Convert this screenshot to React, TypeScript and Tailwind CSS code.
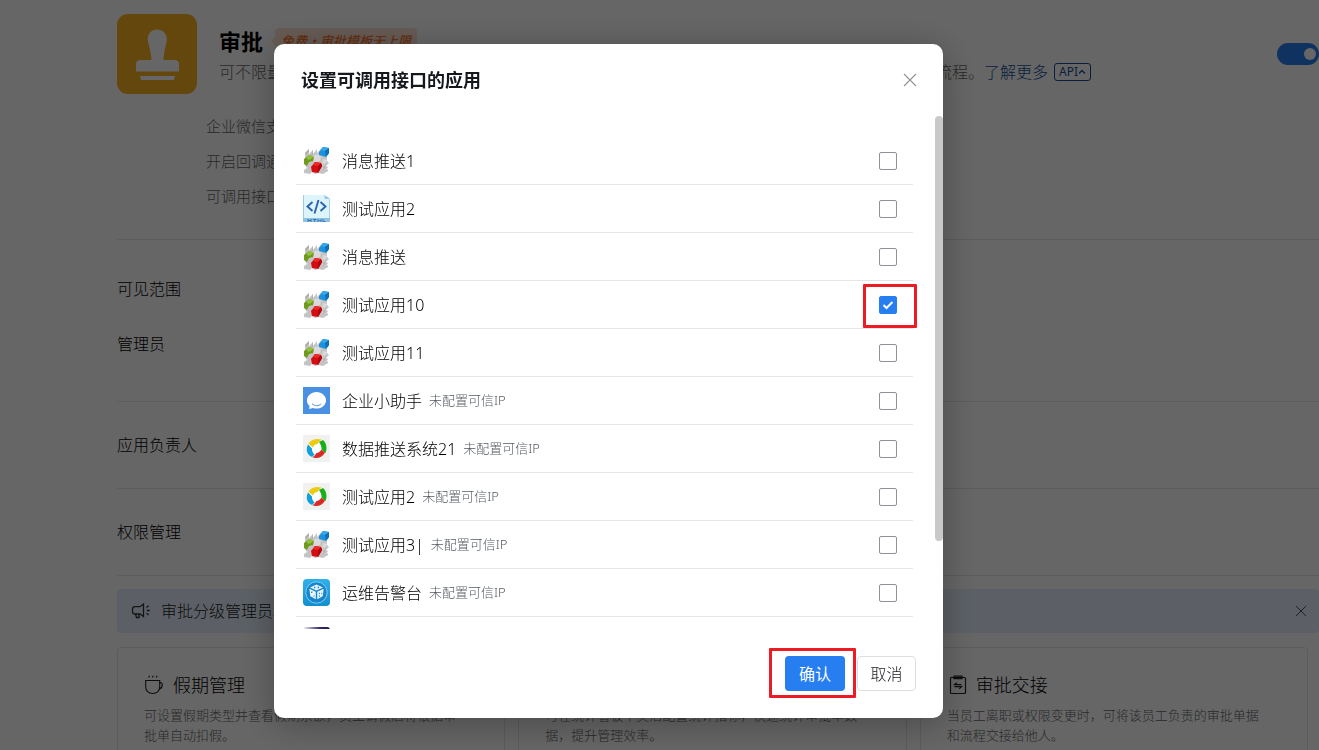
import { useState, type ReactNode } from "react";

type IconKind = "cubes" | "html" | "chat" | "ring" | "dice" | "dark";

interface AppItem {
  id: string;
  name: string;
  icon: IconKind;
  untrusted?: boolean;
  marked?: boolean;
}

const apps: AppItem[] = [
  { id: "a1", name: "消息推送1", icon: "cubes" },
  { id: "a2", name: "测试应用2", icon: "html" },
  { id: "a3", name: "消息推送", icon: "cubes" },
  { id: "a4", name: "测试应用10", icon: "cubes", marked: true },
  { id: "a5", name: "测试应用11", icon: "cubes" },
  { id: "a6", name: "企业小助手", icon: "chat", untrusted: true },
  { id: "a7", name: "数据推送系统21", icon: "ring", untrusted: true },
  { id: "a8", name: "测试应用2", icon: "ring", untrusted: true },
  { id: "a9", name: "测试应用3|", icon: "cubes", untrusted: true },
  { id: "a10", name: "运维告警台", icon: "dice", untrusted: true },
  { id: "a11", name: "", icon: "dark" },
];

function AppIcon({ kind }: { kind: IconKind }) {
  const cls = "h-[27px] w-[27px] shrink-0";
  if (kind === "cubes") {
    return (
      <svg viewBox="0 0 27 27" className={cls} aria-hidden="true">
        <path d="M2 6l4-4v5l4-4v4l4-5v4l3-3 1 5 6 2v4l2 2-3 3 2 1-2 3 2-1v2l-5 3-5-1-3 1-3-2-2 2-6-1v-3l3-2-2-3 2-2v-4H2z" fill="#c4c4c4" />
        <path d="M10 9l5-2 3 3-1 4-6 1zM20 12l4 1-1 3-4 1z" fill="#dadada" />
        <path d="M2 6l4-4v3L3 8zM9 5l1-2v5l-2 2zM20 20l3-1-2 3z" fill="#b0b0b0" />
        <path d="M16 5l4-5 6 1v5l-3 4-7-2z" fill="#1a93dc" />
        <path d="M17 3l3-3 6 1-4 3z" fill="#39a6e6" />
        <path d="M22 4l4-3v5l-3 4z" fill="#0d70b4" />
        <path d="M1 12l5-4 5 2-1 4-4 1-2 4-3-2z" fill="#6f9a1a" />
        <path d="M3 11l3-3 5 2-5 3z" fill="#92bf3c" />
        <path d="M8 20l4-5 6 1 1 3-4 7-6-1z" fill="#d60d10" />
        <path d="M12 15l6 1-3 3-5-1z" fill="#ee2a28" />
        <path d="M15 19l3-3 1 3-4 7z" fill="#b00408" />
      </svg>
    );
  }
  if (kind === "html") {
    return (
      <svg viewBox="0 0 27 27" className={cls} aria-hidden="true">
        <path d="M0 0h21l6 4v23H0z" fill="#dcf5fb" />
        <path d="M21 0l6 3.500-5 .5z" fill="#8fc5e0" />
        <path d="M0 0h.8v27H0zM26.300 4h.7v23h-.7z" fill="#8fc5e0" />
        <path d="M0 23h27v4H0z" fill="#8ec4e2" />
        <path d="M9.500 7L4.500 11.500l5 4.500M17.500 7l5 4.500-5 4.500M15.500 5l-4 13.500" stroke="#2c62b0" strokeWidth="1.900" fill="none" />
        <path d="M5 24v3M8 24v3M5 25.500h3M10 24.500h3.500M11.700 24.500v2.500M15 27v-2.500l1.500 1.500 1.500-1.500v2.500M20 24v2.500h2.500" stroke="#3c74b4" strokeWidth="1" fill="none" />
      </svg>
    );
  }
  if (kind === "chat") {
    return (
      <svg viewBox="0 0 27 27" className={cls} aria-hidden="true">
        <path d="M0 0h27v27H0z" fill="#4a90e2" />
        <path d="M13.500 5c5.300 0 9.500 3.700 9.500 8.300s-4.200 8.300-9.500 8.300c-1.300 0-2.500-.2-3.600-.6L6.200 22l.3-3C4.900 17.600 4 15.600 4 13.300 4 8.700 8.200 5 13.500 5z" fill="#fff" />
        <path d="M9.300 17c2.500 2.300 6.500 2.300 8.600 0" stroke="#4a90e2" strokeWidth="1" fill="none" strokeLinecap="round" />
      </svg>
    );
  }
  if (kind === "ring") {
    return (
      <svg viewBox="0 0 27 27" className={cls} aria-hidden="true">
        <path d="M0 0h27v27H0z" fill="#f1f1f1" />
        <circle cx="13.700" cy="13.500" r="7" fill="#fff" />
        <path d="M5.500 8.500C8 4.500 13 3 18.500 4.500c-1.500 1.500-3 2.500-4 4.500-2 .3-3.800 1.300-4.800 3.500z" fill="#edcb10" />
        <path d="M16 7l4-2c3.500 3 4.500 8.500 2.500 13l-4-3.500c.3-2-.5-5-2.500-7.500z" fill="#16b01a" />
        <path d="M22 17.500c-2 4.500-7 6.500-12.500 5 1.500-1.500 3-2.500 4-4.500 2-.3 3.800-1.300 4.800-3.500z" fill="#d92a26" />
        <path d="M5 9.500l4 4c-.3 2 .5 4 2.500 6L9 22C4 20 2.500 14.500 5 9.500z" fill="#119fdd" />
      </svg>
    );
  }
  if (kind === "dice") {
    return (
      <svg viewBox="0 0 27 27" className={cls} aria-hidden="true">
        <defs>
          <linearGradient id="dice-bg" x1="0" y1="0" x2="0" y2="1">
            <stop offset="0" stopColor="#2fb1ec" />
            <stop offset="1" stopColor="#128fd0" />
          </linearGradient>
        </defs>
        <rect width="27" height="27" rx="4" fill="url(#dice-bg)" />
        <circle cx="13.500" cy="13.500" r="10.700" fill="#1784cb" stroke="#8ed4f4" strokeWidth="0.900" />
        <path d="M13.500 5.500l6.500 3-6.500 3-6.500-3z" fill="#e5f5fd" />
        <path d="M6.300 9.800l6.500 3v7.500l-5.500-3zM20.700 9.800l-6.500 3v7.500l5.500-3z" fill="#e5f5fd" />
        <path d="M11 8.500h1.300M14.600 8.500H16M8.300 13l1 .5M10.600 16.800l.8.4M16 14.600l.8-.4M18.300 14.700l.8-.4M16 17.300l.8-.4" stroke="#1784cb" strokeWidth="1.400" />
      </svg>
    );
  }
  return (
    <svg viewBox="0 0 27 27" className={cls} aria-hidden="true">
      <defs>
        <linearGradient id="dark-bg" x1="0" y1="0" x2="1" y2="0">
          <stop offset="0" stopColor="#f3f3f6" />
          <stop offset="0.600" stopColor="#35306a" />
          <stop offset="1" stopColor="#1b1745" />
        </linearGradient>
      </defs>
      <rect width="27" height="27" rx="3" fill="url(#dark-bg)" />
    </svg>
  );
}

function StampIcon() {
  return (
    <svg viewBox="0 0 80 80" className="h-20 w-20 shrink-0" aria-hidden="true">
      <rect width="80" height="80" rx="11" fill="#f7b21e" />
      <path d="M40 15.500c5.600 0 9.800 4.200 9.800 9.600 0 4-2.300 9.500-3.400 20.900h11.200c2.700 0 4.400 1.500 4.400 4v7.500H19V50c0-2.500 1.700-4 4.400-4h11.200c-1.100-11.400-3.900-16.900-3.900-20.900 0-5.400 3.900-9.600 9.300-9.600z" fill="#fff" />
      <path d="M23 62h35l-1 4H24z" fill="#fff" />
    </svg>
  );
}

function CupIcon() {
  return (
    <svg viewBox="0 0 20 20" className="h-5 w-5 shrink-0" fill="none" stroke="#222" strokeWidth="1.100" aria-hidden="true">
      <path d="M1.700 5.500h14v6.500c0 3.500-2.700 6.500-7 6.500s-7-3-7-6.500zM15.700 7.500c3.500-.7 3.500 5.500-.5 6.500" />
      <path d="M5.500.8L4.700 2.500M9.300.8l-.8 1.700M13.100.8l-.8 1.700" />
    </svg>
  );
}

function ClipboardIcon() {
  return (
    <svg viewBox="0 0 20 20" className="h-5 w-5 shrink-0" fill="none" stroke="#222" strokeWidth="1.200" aria-hidden="true">
      <rect x="3.500" y="2.500" width="15" height="16" rx="1" />
      <path d="M7 2.500V1.200h8v2.500H7z" />
      <path d="M14.500 9.700h-7l2.300-2M7.500 11.700h7l-2.300 2.200" />
    </svg>
  );
}

function MegaphoneIcon() {
  return (
    <svg viewBox="0 0 20 18" className="h-[18px] w-5 shrink-0" fill="none" stroke="#333" strokeWidth="1.300" aria-hidden="true">
      <path d="M12.500 2v12.500L9 12H4C2.300 12 1.500 11 1.500 9.500v-2C1.500 6 2.300 4.700 4 4.700h5zM4.500 12l1 3.500H8V12M15.500 5.500l2.200-1.700M15.800 8.500h3M15.500 11.300l2.200 1.700" />
    </svg>
  );
}

function CloseIcon({ className }: { className: string }) {
  return (
    <svg viewBox="0 0 14 14" className={className} fill="none" stroke="currentColor" strokeWidth="1.100" aria-hidden="true">
      <path d="M1 1l12 12M13 1L1 13" />
    </svg>
  );
}

function FeatureCard({ icon, title, lines }: { icon?: ReactNode; title: string; lines: string[] }) {
  return (
    <article className="h-32 rounded border border-[#e4e6e9] px-[26px] pt-[23px]">
      <h3 className="flex h-7 items-center gap-[9px] text-lg text-black">
        {icon}
        {title}
      </h3>
      <p className="mt-[6px] text-[13px] leading-5 whitespace-nowrap text-[#666]">
        {lines.map((line) => (
          <span key={line} className="block">
            {line}
          </span>
        ))}
      </p>
    </article>
  );
}

function SettingsPage() {
  return (
    <main className="pt-[14px] pl-[117px]">
      <header className="flex">
        <StampIcon />
        <div className="ml-[22px] pt-[11px]">
          <div className="flex h-8 items-center">
            <h1 className="text-[22px] font-bold text-black">审批</h1>
            <svg viewBox="0 0 4 8" className="ml-2 h-2 w-1" aria-hidden="true">
              <path d="M4 0v8L0 4z" fill="#ffe2d2" />
            </svg>
            <span className="rounded bg-[#ffe2d2] px-[6px] py-[3px] font-['Noto_Sans_CJK_SC',sans-serif] text-[13px] leading-5 font-medium text-[#f5752f] italic">
              免费·审批模板无上限
            </span>
          </div>
          <div className="flex h-[29px] items-center text-base whitespace-nowrap text-[#666]">
            <p className="flex w-[765px] justify-between">
              <span>可不限量</span>
              <span>流程。</span>
            </p>
            <a href="#more" className="text-[#1c4f98]">
              了解更多
            </a>
            <a
              href="#api"
              className="ml-[6px] flex h-[18px] items-center rounded-[3px] border border-[#1c4f98] px-1 text-xs leading-4 font-normal text-[#1c4f98]"
            >
              API
              <svg viewBox="0 0 8 6" className="h-[6px] w-2" fill="none" stroke="currentColor" strokeWidth="1.300" aria-hidden="true">
                <path d="M1 4.500L4 1.500l3 3" />
              </svg>
            </a>
          </div>
        </div>
        <button
          type="button"
          role="switch"
          aria-checked="true"
          aria-label="启用审批"
          className="mt-[29px] ml-auto flex h-[22px] w-[42px] shrink-0 items-center justify-end rounded-full bg-[#267ef0] pr-[3px]"
        >
          <span className="h-3 w-3 rounded-full bg-white" />
        </button>
      </header>

      <ul className="mt-[15px] border-b border-[#e4e6e9] pb-[25px] pl-[89px] text-[15px] text-[#666]">
        <li className="h-[35px] leading-[35px]">企业微信支</li>
        <li className="h-[35px] leading-[35px]">开启回调通</li>
        <li className="h-[35px] leading-[35px]">可调用接口</li>
      </ul>

      <section className="border-b border-[#e4e6e9] pt-[22px] pb-[29px] text-base text-black">
        <h2 className="leading-[55px]">可见范围</h2>
        <h2 className="leading-[55px]">管理员</h2>
      </section>
      <section className="border-b border-[#e4e6e9] text-base text-black">
        <h2 className="leading-[86px]">应用负责人</h2>
      </section>
      <section className="border-b border-[#e4e6e9] text-base text-black">
        <h2 className="leading-[86px]">权限管理</h2>
      </section>

      <aside className="mt-[13px] flex h-11 items-center rounded bg-[#e6f1ff] pr-3 pl-[14px] text-base text-[#222]">
        <MegaphoneIcon />
        <span className="ml-[10px]">审批分级管理员和</span>
        <button type="button" aria-label="关闭提示" className="ml-auto text-[#444]">
          <CloseIcon className="h-3 w-3" />
        </button>
      </aside>

      <div className="mt-[14px] mr-[11px] grid grid-cols-3 gap-[13px]">
        <FeatureCard
          icon={<CupIcon />}
          title="假期管理"
          lines={["可设置假期类型并查看假期余额，员工请假后将根据审", "批单自动扣假。"]}
        />
        <FeatureCard title="统计" lines={["可在统计看板中灵活配置统计指标，快速统计审批单数", "据，提升管理效率。"]} />
        <FeatureCard
          icon={<ClipboardIcon />}
          title="审批交接"
          lines={["当员工离职或权限变更时，可将该员工负责的审批单据", "和流程交接给他人。"]}
        />
      </div>
    </main>
  );
}

function Highlight({ className }: { className: string }) {
  return (
    <span aria-hidden="true" className={`pointer-events-none absolute rounded-[1px] border-[3px] border-[#ed1c24] ${className}`} />
  );
}

function AppRow({ app, checked, onToggle }: { app: AppItem; checked: boolean; onToggle: () => void }) {
  return (
    <li className="flex h-12 items-center border-b border-[#e4e6e9] pr-4 pl-[7px]">
      <label htmlFor={app.id} className="flex flex-1 items-center">
        <AppIcon kind={app.icon} />
        <span className="ml-3 text-base text-black">{app.name}</span>
        {app.untrusted && <span className="ml-[7px] text-[13px] text-[#555a61]">未配置可信IP</span>}
      </label>
      <span className="relative flex">
        <input
          id={app.id}
          type="checkbox"
          checked={checked}
          onChange={onToggle}
          aria-label={app.name || "应用"}
          className="h-[18px] w-[18px] appearance-none rounded-[2px] border border-[#8f9399] bg-white checked:border-[#267ef0] checked:bg-[#267ef0]"
        />
        {checked && (
          <svg
            viewBox="0 0 18 18"
            className="pointer-events-none absolute inset-0 h-[18px] w-[18px]"
            fill="none"
            stroke="#fff"
            strokeWidth="2"
            aria-hidden="true"
          >
            <path d="M4.500 9l3 3 6-6" />
          </svg>
        )}
        {app.marked && <Highlight className="-top-3 -right-5 -bottom-[14px] -left-4" />}
      </span>
    </li>
  );
}

export default function App() {
  const [selected, setSelected] = useState<string[]>(["a4"]);
  const toggle = (id: string) =>
    setSelected((prev) => (prev.includes(id) ? prev.filter((x) => x !== id) : [...prev, id]));

  return (
    <div className="h-screen overflow-hidden bg-white font-['Noto_Sans','Noto_Sans_CJK_SC',sans-serif] font-light">
      <SettingsPage />
      <div className="fixed inset-0 flex items-start overflow-hidden bg-black/60 pt-11 pl-[274px]">
        <div
          role="dialog"
          aria-modal="true"
          aria-labelledby="dialog-title"
          className="w-[669px] rounded-[10px] bg-white shadow-[0_6px_36px_rgba(0,0,0,0.3)]"
        >
          <div className="flex h-[72px] items-center justify-between pr-[26px] pl-[27px]">
            <h2 id="dialog-title" className="text-lg font-semibold text-[#16181d]">
              设置可调用接口的应用
            </h2>
            <button type="button" aria-label="关闭" className="text-[#8f9399]">
              <CloseIcon className="h-[14px] w-[14px]" />
            </button>
          </div>
          <div className="flex h-[513px] items-start gap-[22px] overflow-hidden pl-[22px]">
            <ul className="flex-1 pt-[21px]">
              {apps.map((app) => (
                <AppRow key={app.id} app={app} checked={selected.includes(app.id)} onToggle={() => toggle(app.id)} />
              ))}
            </ul>
            <div className="h-[425px] w-2 rounded-full bg-[#c9c9c9]" />
          </div>
          <div className="flex justify-end gap-3 pt-[27px] pr-[27px] pb-[27px] text-base">
            <button type="button" className="relative h-[35px] w-[60px] rounded bg-[#267ef0] font-normal text-white">
              确认
              <Highlight className="-top-2 -right-[11px] -bottom-[7px] -left-4" />
            </button>
            <button type="button" className="h-[35px] w-[59px] rounded border border-[#dcdee0] text-[#16181d]">
              取消
            </button>
          </div>
        </div>
      </div>
    </div>
  );
}
